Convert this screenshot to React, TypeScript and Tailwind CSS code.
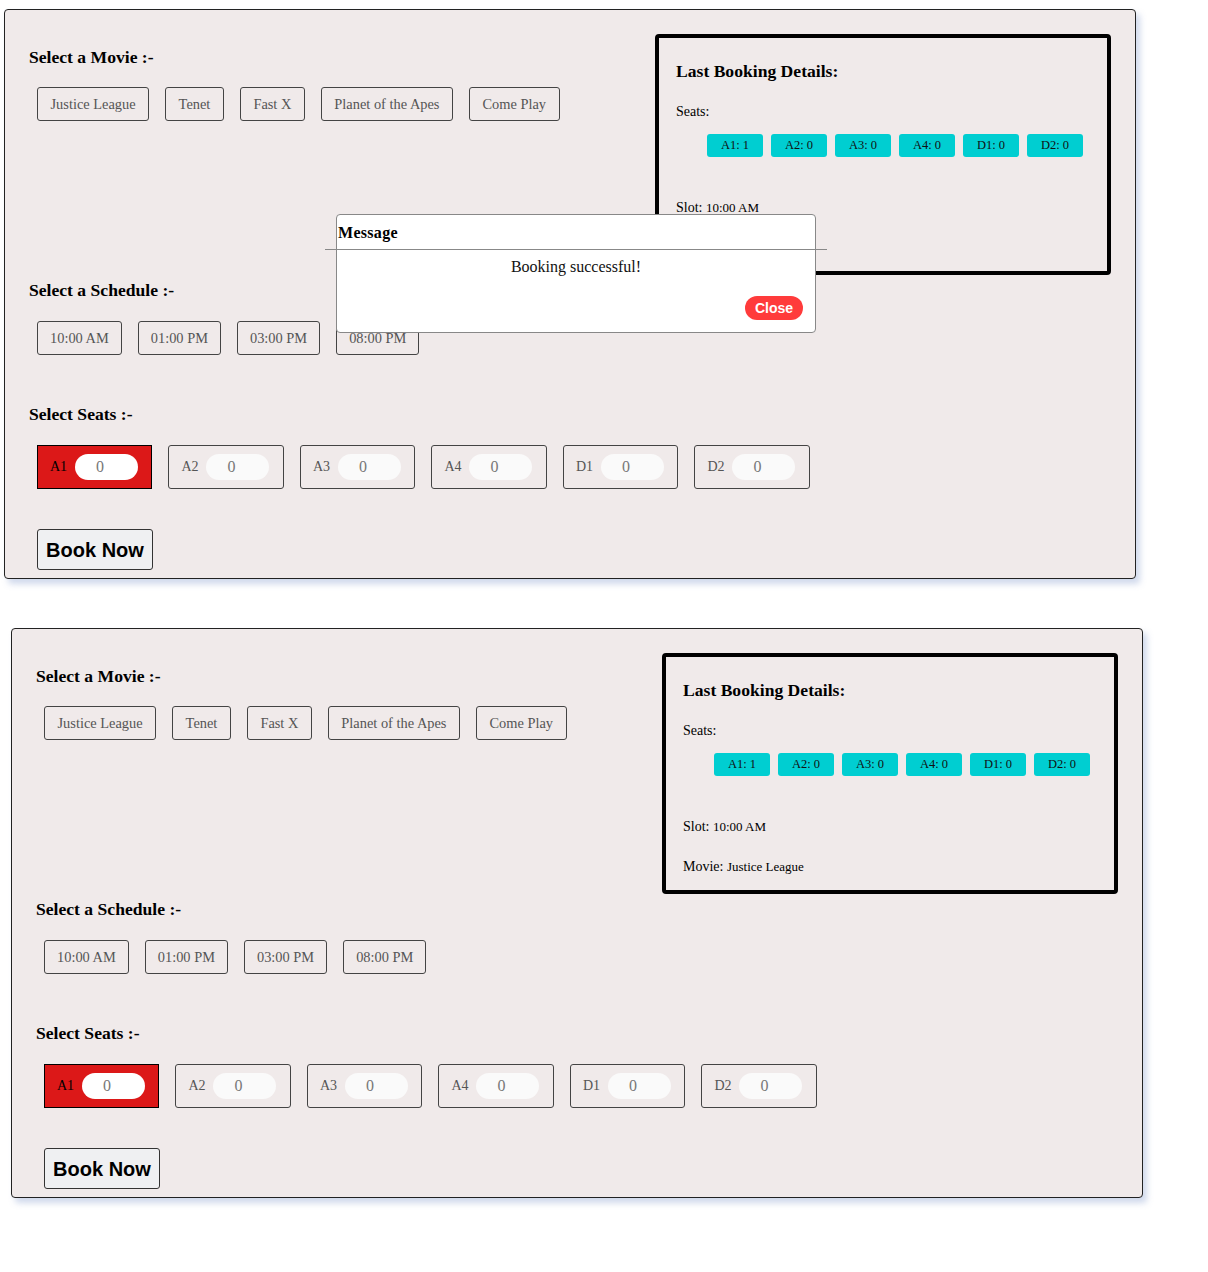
import React from "react";

const movies = ["Justice League", "Tenet", "Fast X", "Planet of the Apes", "Come Play"];
const slots = ["10:00 AM", "01:00 PM", "03:00 PM", "08:00 PM"];
const seats = ["A1", "A2", "A3", "A4", "D1", "D2"];
const counts: Record<string, number> = { A1: 1, A2: 0, A3: 0, A4: 0, D1: 0, D2: 0 };

function OptionButton({ label, wide }: { label: string; wide?: boolean }) {
  return (
    <button
      className={
        "h-[34px] border border-[#444] rounded-[3px] bg-transparent text-[14.4px] leading-[16px] text-[#555] font-['Liberation_Serif',serif] " +
        (wide ? "px-[12.5px]" : "px-[12px]")
      }
    >
      {label}
    </button>
  );
}

function Heading({ children, className = "" }: { children: React.ReactNode; className?: string }) {
  return (
    <h3 className={"text-[17.6px] leading-[20px] font-bold text-black font-['Liberation_Serif',serif] " + className}>
      {children}
    </h3>
  );
}

function Panel({ withModal, className = "" }: { withModal?: boolean; className?: string }) {
  return (
    <div
      className={
        "relative w-[1132px] h-[570px] border border-[#222] rounded-[4px] bg-[#f0eaea] shadow-[4px_5px_6px_rgba(120,145,200,0.35)] pl-[24px] pt-[24px] font-['Liberation_Serif',serif] " +
        className
      }
    >
      <div className="flex justify-between items-start">
        <div>
          <Heading className="mt-[13px]">Select a Movie :-</Heading>
          <div className="flex gap-[16px] mt-[20px] ml-[8px]">
            {movies.map((m) => (
              <OptionButton key={m} label={m} wide />
            ))}
          </div>
        </div>
        <div className="w-[456px] h-[241px] mr-[24px] border-4 border-black rounded-[4px] pl-[17px] pt-[23px]">
          <Heading>Last Booking Details:</Heading>
          <p className="mt-[23px] text-[14px] leading-[16px] text-black">Seats:</p>
          <div className="flex gap-[8px] mt-[14px] ml-[31px]">
            {seats.map((s) => (
              <div
                key={s}
                className="w-[56px] h-[23px] rounded-[3px] bg-[#00ced1] flex items-center justify-center text-[12.5px] text-[#111]"
              >
                {s}: {counts[s]}
              </div>
            ))}
          </div>
          <p className="mt-[43px] text-[14px] leading-[16px] text-black">
            Slot: <span className="text-[13px]">10:00 AM</span>
          </p>
          <p className="mt-[24px] text-[14px] leading-[16px] text-black">
            Movie: <span className="text-[13px]">Justice League</span>
          </p>
        </div>
      </div>

      <Heading className="mt-[5px]">Select a Schedule :-</Heading>
      <div className="flex gap-[16px] mt-[21px] ml-[8px]">
        {slots.map((s) => (
          <OptionButton key={s} label={s} />
        ))}
      </div>

      <Heading className="mt-[49px]">Select Seats :-</Heading>
      <div className="flex gap-[16.2px] mt-[21px] ml-[8px]">
        {seats.map((s) => {
          const sel = s === "A1";
          return (
            <div
              key={s}
              className={
                "w-[115.3px] h-[44px] flex items-center pl-[12px] " +
                (sel ? "bg-[#dc1818] border border-black" : "border border-[#444] rounded-[3px]")
              }
            >
              <span className={"w-[17px] text-[14px] leading-[16px] " + (sel ? "text-black" : "text-[#555]")}>{s}</span>
              <div
                className={
                  "ml-[8px] w-[63px] h-[26px] rounded-full flex items-center pl-[21px] text-[16px] text-[#777] " +
                  (sel ? "bg-white" : "bg-[#fafafa]")
                }
              >
                0
              </div>
            </div>
          );
        })}
      </div>

      <button className="mt-[40px] ml-[8px] w-[116px] h-[41px] border border-[#333] rounded-[3px] bg-[#eff0f2] text-[20px] font-bold text-black font-['Liberation_Sans',Arial,sans-serif]">
        Book Now
      </button>

      {withModal && (
        <div className="absolute left-[331px] top-[204px] w-[480px] h-[119px] bg-white border border-[#888] rounded-[4px]">
          <div className="h-[34px] flex items-center pl-[1px] pt-[1px] text-[16px] font-bold text-black tracking-[0.3px]">
            Message
          </div>
          <div className="-mx-[12px] h-px bg-[#888]" />
          <p className="text-center text-[16px] leading-[18px] mt-[8px] text-[#111]">Booking successful!</p>
          <div className="flex justify-end pr-[12px] mt-[20px]">
            <button className="w-[58px] h-[24px] rounded-full bg-[#ff3b3b] text-white text-[14px] font-bold font-['Liberation_Sans',Arial,sans-serif]">
              Close
            </button>
          </div>
        </div>
      )}
    </div>
  );
}

export default function App() {
  return (
    <div className="w-[1208px] min-h-[1272px] bg-white pt-[9px]">
      <Panel withModal className="ml-[4px]" />
      <Panel className="ml-[11px] mt-[49px]" />
    </div>
  );
}
